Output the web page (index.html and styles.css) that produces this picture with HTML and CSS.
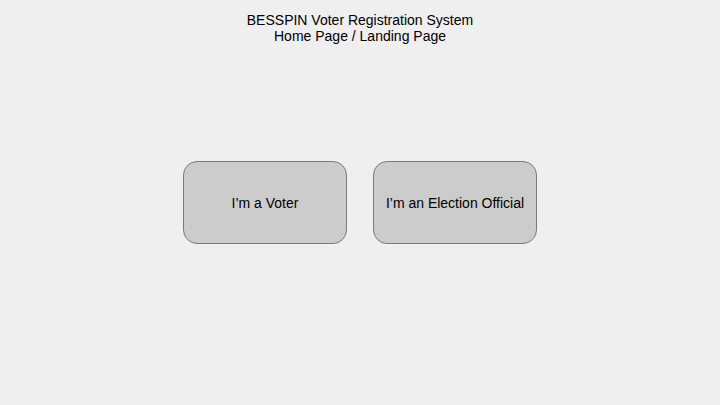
FILE: index.html
```html
<!DOCTYPE html>
<html>
<head>
<meta charset="utf-8">
<link rel="stylesheet" href="styles.css">
</head>
<body>
<div class="page">
  <header class="title">
    <div>BESSPIN Voter Registration System</div>
    <div>Home Page / Landing Page</div>
  </header>
  <div class="choices">
    <div class="choice">I’m a Voter</div>
    <div class="choice">I’m an Election Official</div>
  </div>
</div>
</body>
</html>
```
FILE: styles.css
```css
html, body {
  margin: 0;
  padding: 0;
  background: #efefef;
}
.page {
  width: 720px;
  height: 405px;
  font-family: "Liberation Sans", Arial, sans-serif;
  color: #000;
  display: flex;
  flex-direction: column;
  align-items: center;
}
.title {
  padding-top: 12px;
  font-size: 14px;
  line-height: 16px;
  text-align: center;
}
.choices {
  margin-top: 117px;
  display: flex;
  gap: 26px;
}
.choice {
  width: 162px;
  height: 81px;
  box-sizing: content-box;
  border: 1px solid #7a7a7a;
  border-radius: 14px;
  background: #cccccc;
  display: flex;
  align-items: center;
  justify-content: center;
  font-size: 14px;
}
```
